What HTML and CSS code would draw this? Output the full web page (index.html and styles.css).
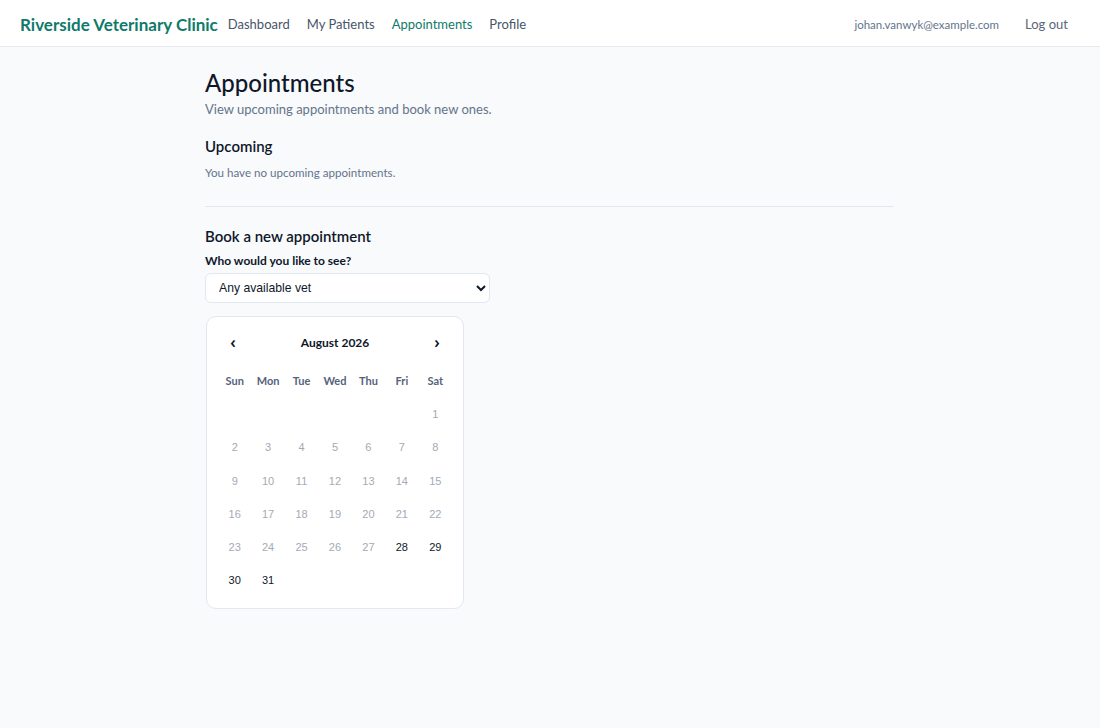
FILE: index.html
```html
<!DOCTYPE html>
<html lang="en">
<head>
<meta charset="utf-8">
<title>Appointments</title>
<link rel="stylesheet" href="styles.css">
</head>
<body>
<header class="topbar">
  <div class="topbar-left">
    <a class="brand" href="#">Riverside Veterinary Clinic</a>
    <nav class="nav">
      <a href="#" class="nav-link">Dashboard</a>
      <a href="#" class="nav-link">My Patients</a>
      <a href="#" class="nav-link active">Appointments</a>
      <a href="#" class="nav-link">Profile</a>
    </nav>
  </div>
  <div class="topbar-right">
    <span class="user-email">johan.vanwyk@example.com</span>
    <button class="logout">Log out</button>
  </div>
</header>

<main class="page">
  <h1 class="page-title">Appointments</h1>
  <p class="page-sub">View upcoming appointments and book new ones.</p>

  <section class="section">
    <h2 class="section-title">Upcoming</h2>
    <p class="muted">You have no upcoming appointments.</p>
  </section>

  <hr class="divider">

  <section class="section">
    <h2 class="section-title">Book a new appointment</h2>
    <label class="field-label" for="vet">Who would you like to see?</label>
    <select id="vet" class="select">
      <option>Any available vet</option>
    </select>

    <div class="calendar">
      <div class="cal-head">
        <button class="cal-nav">&#8249;</button>
        <span class="cal-month">August 2026</span>
        <button class="cal-nav">&#8250;</button>
      </div>
      <div class="cal-grid">
        <span class="dow">Sun</span><span class="dow">Mon</span><span class="dow">Tue</span><span class="dow">Wed</span><span class="dow">Thu</span><span class="dow">Fri</span><span class="dow">Sat</span>
        <span class="empty"></span><span class="empty"></span><span class="empty"></span><span class="empty"></span><span class="empty"></span><span class="empty"></span>
        <button class="day" disabled>1</button>
        <button class="day" disabled>2</button><button class="day" disabled>3</button><button class="day" disabled>4</button><button class="day" disabled>5</button><button class="day" disabled>6</button><button class="day" disabled>7</button><button class="day" disabled>8</button>
        <button class="day" disabled>9</button><button class="day" disabled>10</button><button class="day" disabled>11</button><button class="day" disabled>12</button><button class="day" disabled>13</button><button class="day" disabled>14</button><button class="day" disabled>15</button>
        <button class="day" disabled>16</button><button class="day" disabled>17</button><button class="day" disabled>18</button><button class="day" disabled>19</button><button class="day" disabled>20</button><button class="day" disabled>21</button><button class="day" disabled>22</button>
        <button class="day" disabled>23</button><button class="day" disabled>24</button><button class="day" disabled>25</button><button class="day" disabled>26</button><button class="day" disabled>27</button><button class="day">28</button><button class="day">29</button>
        <button class="day">30</button><button class="day">31</button>
      </div>
    </div>
  </section>
</main>
</body>
</html>
```

FILE: styles.css
```css
* { box-sizing: border-box; }

body {
  margin: 0;
  background: #f8fafc;
  font-family: Lato, "Noto Sans", sans-serif;
  color: #0f172a;
}

.topbar {
  display: flex;
  align-items: center;
  justify-content: space-between;
  height: 47px;
  padding: 2px 20px 0;
  background: #ffffff;
  border-bottom: 1px solid #e5e9f0;
}

.topbar-left {
  display: flex;
  align-items: center;
  gap: 10px;
}

.brand {
  font-size: 17px;
  font-weight: 700;
  color: #0f7a6a;
  text-decoration: none;
}

.nav {
  display: flex;
  gap: 17px;
}

.nav-link {
  font-size: 13px;
  color: #475569;
  text-decoration: none;
}

.nav-link.active {
  color: #0f7a6a;
}

.topbar-right {
  display: flex;
  align-items: center;
  gap: 14px;
}

.user-email {
  font-size: 11.5px;
  color: #64748b;
}

.logout {
  font-family: inherit;
  font-size: 13px;
  color: #5b6678;
  background: none;
  border: none;
  padding: 6px 12px;
  cursor: pointer;
}

.page {
  max-width: 720px;
  margin: 0 auto;
  padding: 22px 16px 40px 15px;
}

.page-title {
  margin: 0;
  font-size: 24px;
  font-weight: 500;
  line-height: 28px;
}

.page-sub {
  margin: 2px 0 0;
  font-size: 13px;
  line-height: 20px;
  color: #64748b;
}

.section-title {
  margin: 0;
  font-size: 15px;
  font-weight: 600;
  line-height: 20px;
}

.section:first-of-type .section-title {
  margin-top: 17px;
}

.muted {
  margin: 9px 0 0;
  font-size: 11.6px;
  line-height: 16px;
  color: #64748b;
}

.divider {
  border: none;
  border-top: 1px solid #e2e8f0;
  margin: 25px 0 19px;
}

.field-label {
  display: block;
  margin-top: 7px;
  font-size: 12px;
  font-weight: 700;
  line-height: 16px;
}

.select {
  display: block;
  margin-top: 4px;
  width: 285px;
  height: 30px;
  padding: 0 8px 0 9px;
  font-family: "Liberation Sans", Arial, sans-serif;
  font-size: 12.2px;
  color: #0f172a;
  background: #ffffff;
  border: 1px solid #e2e8f0;
  border-radius: 6px;
}

.calendar {
  margin: 13px 0 0 1px;
  width: 258px;
  padding: 11px;
  background: #ffffff;
  border: 1px solid #e2e8f0;
  border-radius: 10px;
}

.cal-head {
  display: flex;
  align-items: center;
  justify-content: space-between;
  height: 28px;
  margin-bottom: 8px;
}

.cal-nav {
  width: 30px;
  height: 28px;
  padding: 0;
  background: none;
  border: none;
  font-family: "Noto Sans", sans-serif;
  font-size: 16px;
  font-weight: 600;
  color: #0f172a;
  cursor: pointer;
}

.cal-month {
  font-size: 12px;
  font-weight: 700;
}

.cal-grid {
  display: grid;
  grid-template-columns: repeat(7, 1fr);
  grid-auto-rows: 33.3px;
}

.dow {
  display: flex;
  align-items: center;
  justify-content: center;
  font-size: 11px;
  font-weight: 700;
  color: #55637a;
}

.day {
  padding: 0;
  background: none;
  border: none;
  border-radius: 6px;
  font-family: "Liberation Sans", Arial, sans-serif;
  font-size: 11px;
  color: #0f172a;
  cursor: pointer;
}

.day:disabled {
  color: #a3aab5;
  cursor: default;
}
```
